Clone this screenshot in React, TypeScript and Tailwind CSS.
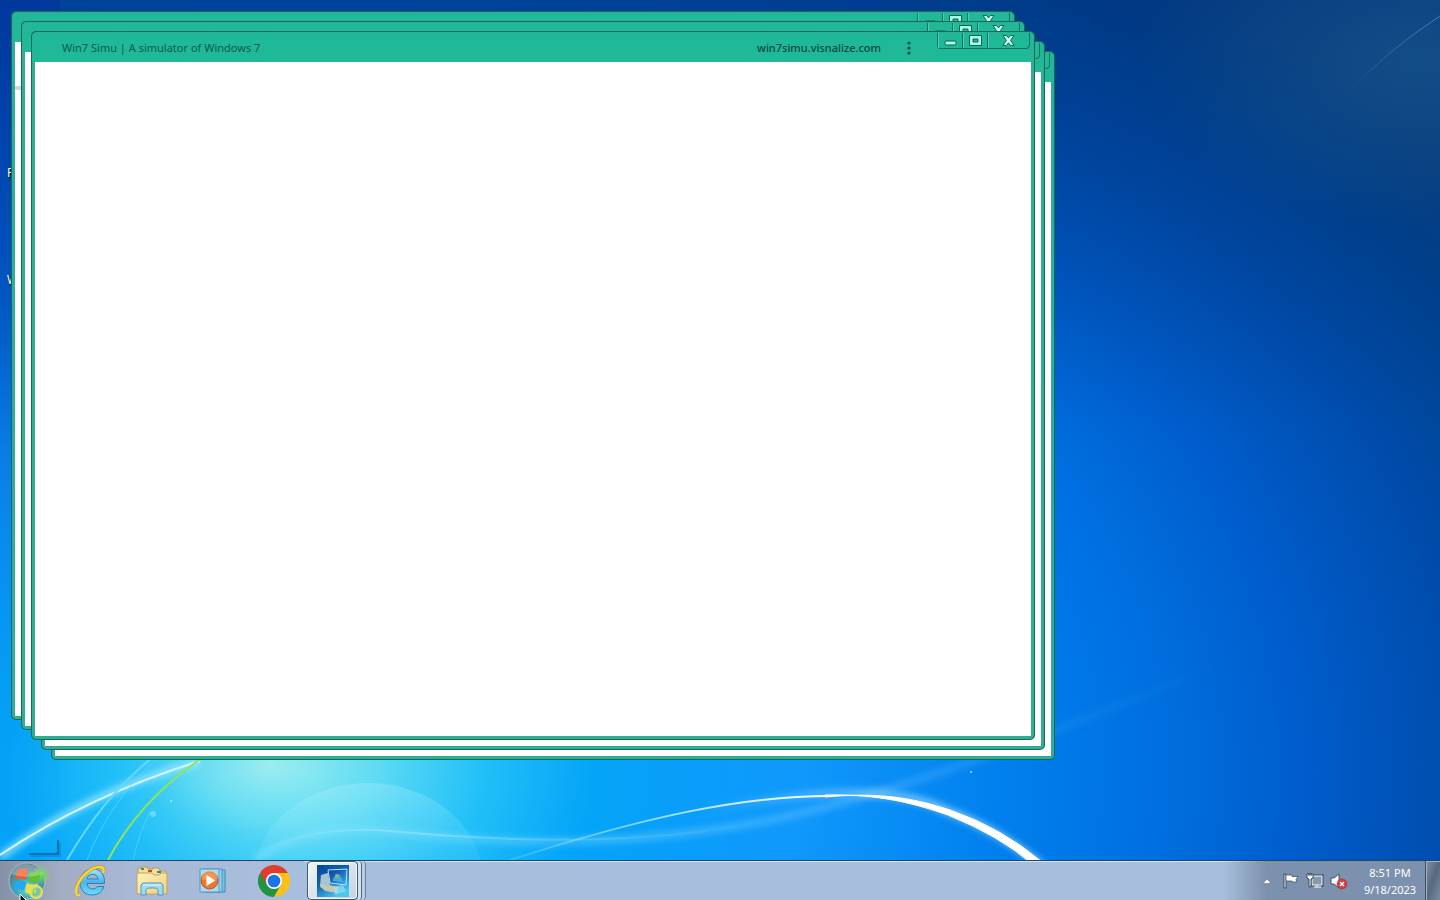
import React from 'react';
import clsx from 'clsx';

const Wallpaper: React.FC = () => (
  <svg
    className="absolute inset-0 w-full h-full"
    viewBox="0 0 1440 860"
    preserveAspectRatio="none"
    aria-hidden="true"
  >
    <defs>
      <radialGradient id="sky" gradientUnits="userSpaceOnUse" cx="0" cy="0" r="1400" gradientTransform="translate(300 770) scale(1 0.74)">
        <stop offset="0" stopColor="#70e2f2" />
        <stop offset="0.06" stopColor="#58d8f4" />
        <stop offset="0.13" stopColor="#22c0f8" />
        <stop offset="0.21" stopColor="#04a4f8" />
        <stop offset="0.36" stopColor="#1098fc" />
        <stop offset="0.5" stopColor="#0080ee" />
        <stop offset="0.62" stopColor="#006edf" />
        <stop offset="0.72" stopColor="#005cca" />
        <stop offset="0.83" stopColor="#004cac" />
        <stop offset="0.93" stopColor="#00438f" />
        <stop offset="1" stopColor="#084080" />
      </radialGradient>
      <linearGradient id="shade" x1="0" y1="0" x2="0" y2="1">
        <stop offset="0" stopColor="#003480" stopOpacity="0.6" />
        <stop offset="0.25" stopColor="#003480" stopOpacity="0.3" />
        <stop offset="0.5" stopColor="#003480" stopOpacity="0" />
      </linearGradient>
      <linearGradient id="edge" x1="0" y1="0" x2="0" y2="1">
        <stop offset="0" stopColor="#0034a0" stopOpacity="0.7" />
        <stop offset="0.35" stopColor="#0044b4" stopOpacity="0.6" />
        <stop offset="0.8" stopColor="#0070e0" stopOpacity="0.1" />
        <stop offset="1" stopColor="#0070e0" stopOpacity="0" />
      </linearGradient>
      <radialGradient id="glow">
        <stop offset="0" stopColor="#b4f2ee" stopOpacity="0.7" />
        <stop offset="1" stopColor="#7ae6f6" stopOpacity="0" />
      </radialGradient>
      <radialGradient id="haze">
        <stop offset="0" stopColor="#2a6a90" stopOpacity="0.4" />
        <stop offset="1" stopColor="#2a6a90" stopOpacity="0" />
      </radialGradient>
      <linearGradient id="bubble" x1="0" y1="0" x2="0" y2="1">
        <stop offset="0" stopColor="#c8f8ff" stopOpacity="0.24" />
        <stop offset="0.5" stopColor="#a0ecff" stopOpacity="0.04" />
      </linearGradient>
      <linearGradient id="arc" x1="0" y1="0" x2="1" y2="0">
        <stop offset="0" stopColor="#9fe4ff" stopOpacity="0.2" />
        <stop offset="0.5" stopColor="#c8f0ff" stopOpacity="0.8" />
        <stop offset="1" stopColor="#fff" />
      </linearGradient>
      <linearGradient id="arcGlow" gradientUnits="userSpaceOnUse" x1="700" y1="0" x2="960" y2="0">
        <stop offset="0" stopColor="#a8e0ff" stopOpacity="0" />
        <stop offset="1" stopColor="#a8e0ff" stopOpacity="0.7" />
      </linearGradient>
      <linearGradient id="streak" x1="0" y1="1" x2="1" y2="0">
        <stop offset="0" stopColor="#6aa8d8" stopOpacity="0" />
        <stop offset="1" stopColor="#6aa8d8" stopOpacity="0.6" />
      </linearGradient>
      <linearGradient id="wave" x1="0" y1="0" x2="1" y2="0">
        <stop offset="0" stopColor="#8fe8ff" stopOpacity="0.4" />
        <stop offset="0.6" stopColor="#6cc4ff" stopOpacity="0.4" />
        <stop offset="1" stopColor="#3a9cf8" stopOpacity="0" />
      </linearGradient>
      <linearGradient id="crest" x1="0" y1="0" x2="1" y2="0">
        <stop offset="0" stopColor="#9eeaff" stopOpacity="0" />
        <stop offset="0.3" stopColor="#9eeaff" stopOpacity="0.5" />
        <stop offset="1" stopColor="#9eeaff" stopOpacity="0" />
      </linearGradient>
      <filter id="soft" x="-10%" y="-20%" width="120%" height="140%">
        <feGaussianBlur stdDeviation="3" />
      </filter>
    </defs>
    <rect width="1440" height="860" fill="url(#sky)" />
    <rect width="1440" height="860" fill="url(#shade)" />
    <rect width="60" height="860" fill="url(#edge)" />
    <ellipse cx="270" cy="765" rx="130" ry="75" fill="url(#glow)" />
    <ellipse cx="1420" cy="60" rx="280" ry="170" fill="url(#haze)" />
    <path d="M1345 96 Q1385 52 1440 16" fill="none" stroke="url(#streak)" strokeWidth="1" />
    <ellipse cx="368" cy="880" rx="115" ry="97" fill="url(#bubble)" />
    <path d="M255 860 Q310 822 390 831 C520 848 640 844 760 822 C900 795 1060 730 1220 664" fill="none" stroke="url(#wave)" strokeWidth="8" filter="url(#soft)" />
    <path d="M245 860 Q305 824 390 831 C510 842 640 846 760 822" fill="none" stroke="url(#crest)" strokeWidth="2" />
    <path d="M0 857 Q90 790 200 762" fill="none" stroke="#9eeaff" strokeOpacity="0.7" strokeWidth="8" filter="url(#soft)" />
    <path d="M0 855 Q90 795 200 761" fill="none" stroke="#d6f5ff" strokeWidth="2" />
    <path d="M67 860 Q105 795 152 758" fill="none" stroke="#62d9ff" strokeWidth="2" />
    <path d="M87 860 Q110 800 158 758" fill="none" stroke="#62d9ff" strokeOpacity="0.7" strokeWidth="1" />
    <path d="M133 860 Q140 830 150 812" fill="none" stroke="#72e0ff" strokeOpacity="0.5" strokeWidth="1" />
    <path d="M108 860 Q140 800 202 758" fill="none" stroke="#8ee45c" strokeWidth="2" />
    <circle cx="153" cy="814" r="3" fill="#a4edff" fillOpacity="0.5" />
    <circle cx="171" cy="801" r="1" fill="#a8f0ff" />
    <circle cx="971" cy="772" r="1" fill="#a9dcff" />
    <path d="M700 813 C810 788 895 786 945 810 Q1000 830 1044 868" fill="none" stroke="url(#arcGlow)" strokeWidth="9" filter="url(#soft)" />
    <path d="M510 860 C650 815 745 796 830 796" fill="none" stroke="url(#arc)" strokeWidth="2" />
    <path d="M825 795 C870 794 905 800 948 815 Q1000 836 1032 864 L1042 862 Q1002 828 950 810 C905 795 870 793 825 797 Z" fill="#fff" stroke="#fff" strokeWidth="1" />
    <path d="M29 854 H58 V840" fill="none" stroke="#06649c" strokeOpacity="0.8" strokeWidth="2" />
    <path d="M31 856 H60 V843" fill="none" stroke="#06649c" strokeOpacity="0.3" strokeWidth="2" />
  </svg>
);

const controlClass =
  'h-[15px] flex items-center justify-center border-r border-[#14705f] shadow-[inset_1px_0_0_#4cd0b2]';

const WindowControls: React.FC = () => (
  <div className="flex self-start mr-[3px] border-l border-b border-[#14705f] rounded-b">
    <button type="button" aria-label="Minimize" className={clsx(controlClass, 'w-[25px] pt-1')}>
      <svg width="13" height="6" viewBox="0 0 13 6">
        <rect x="1" y="1" width="11" height="4" rx="1" fill="#a8fce8" stroke="#14604f" />
      </svg>
    </button>
    <button type="button" aria-label="Maximize" className={clsx(controlClass, 'w-[25px]')}>
      <svg width="13" height="11" viewBox="0 0 13 11">
        <path fillRule="evenodd" d="M.5.5h12v10H.5zM4 4h5v3H4z" fill="#a8fce8" stroke="#14604f" />
      </svg>
    </button>
    <button type="button" aria-label="Close" className={clsx(controlClass, 'w-[42px] rounded-br')}>
      <svg width="13" height="11" viewBox="0 0 13 11">
        <path d="M1 .5h3.5l2 2.4 2-2.4H12L8.6 5.4l3.5 5H8.5l-2-2.6-2 2.6H.9l3.5-5z" fill="#c8fff0" stroke="#14604f" />
      </svg>
    </button>
  </div>
);

interface AppWindowProps {
  position: string;
  withTitle?: boolean;
  children?: React.ReactNode;
}

const AppWindow: React.FC<AppWindowProps> = ({ position, withTitle = false, children }) => (
  <section
    className={clsx(
      'absolute flex flex-col rounded border border-[#2fae92] bg-[#2fae92] shadow-[0_0_0_1px_#17695a] overflow-hidden',
      position
    )}
  >
    <header className="h-[29px] flex-shrink-0 flex items-center bg-[#1fb999] text-[11px] leading-4 text-[#0b5a4c]">
      {/* 标题栏 */}
      {withTitle && <h1 className="pl-[29px] whitespace-nowrap">Win7 Simu | A simulator of Windows 7</h1>}
      <div className="flex-1" />
      {withTitle && (
        <>
          <span className="font-medium text-[#06483d] whitespace-nowrap">win7simu.visnalize.com</span>
          <button type="button" aria-label="Menu" className="w-6 h-6 ml-4 mr-4 flex items-center justify-center">
            <svg width="4" height="14" viewBox="0 0 4 14" fill="#0b4a40">
              <circle cx="2" cy="2" r="1.6" />
              <circle cx="2" cy="7" r="1.6" />
              <circle cx="2" cy="12" r="1.6" />
            </svg>
          </button>
        </>
      )}
      <WindowControls />
    </header>
    <div className="flex-1 mx-[2px] mb-[2px] bg-white">{children}</div>
  </section>
);

const StartOrb: React.FC = () => (
  <svg width="46" height="40" viewBox="0 0 46 40">
    <defs>
      <radialGradient id="orb" cx="0.5" cy="0.7" r="0.65">
        <stop offset="0" stopColor="#5ce0dc" />
        <stop offset="0.5" stopColor="#3fa4b4" />
        <stop offset="1" stopColor="#5a7486" />
      </radialGradient>
      <radialGradient id="halo">
        <stop offset="0.2" stopColor="#6ce048" stopOpacity="0.9" />
        <stop offset="1" stopColor="#84dc68" stopOpacity="0" />
      </radialGradient>
    </defs>
    <circle cx="22" cy="20" r="18" fill="url(#orb)" stroke="#9fc4cc" />
    <circle cx="36" cy="14" r="10" fill="url(#halo)" />
    <path d="M12 10q5-5 11-1l-2 10q-6-3-11 0z" fill="#f05a28" />
    <path d="M25 10q5 3 11-1l-2 10q-6 4-11 1z" fill="#63c030" />
    <path d="M10 21q5-3 11 0l-2 9q-6-4-11 0z" fill="#22a8f4" />
    <path d="M22 22q6 3 11 0l-2 9q-6 4-11 0z" fill="#f6dc3c" />
    <path d="M6 13Q12 2 22 3q11 0 16 10-16 6-32 0z" fill="#fff" fillOpacity="0.25" />
    <circle cx="31" cy="31" r="6" fill="#b4dc6c" fillOpacity="0.6" stroke="#dfe45c" strokeWidth="2" />
    <circle cx="31" cy="31" r="3" fill="none" stroke="#60c2bd" />
    <path d="M15 33v11l3-3 6 1z" fill="#111" stroke="#fff" />
  </svg>
);

const InternetExplorerIcon: React.FC = () => (
  <svg width="32" height="32" viewBox="0 0 32 32">
    <defs>
      <linearGradient id="ie" x1="0" y1="0" x2="0" y2="1">
        <stop offset="0" stopColor="#a4e8fc" />
        <stop offset="0.5" stopColor="#48b4e8" />
        <stop offset="1" stopColor="#6cdcfa" />
      </linearGradient>
    </defs>
    <path
      fillRule="evenodd"
      d="M29.500 18.500H12c.4 3.500 2.700 5.500 5.500 5.500 2.300 0 4-1 5-2.500h6.500c-2 5.500-6 8.500-12 8.500C10 30 5 25 5 17.500S10 4 17.500 4c8 0 12.500 5.500 12 14.500zM12 14h11c-.4-3-2.400-4.700-5.400-4.700S12.500 11 12 14z"
      fill="url(#ie)"
      stroke="#2784bb"
    />
    <path d="M5 30C0 32 0 24 4 17 9 8 19 1 26 2c3 .5 3 3 2 6" fill="none" stroke="#c49a22" strokeWidth="3.600" />
    <path d="M5 30C0 32 0 24 4 17 9 8 19 1 26 2c3 .5 3 3 2 6" fill="none" stroke="#f5d548" strokeWidth="2.400" />
  </svg>
);

const FolderIcon: React.FC = () => (
  <svg width="32" height="32" viewBox="0 0 32 32">
    <defs>
      <linearGradient id="folder" x1="0" y1="0" x2="1" y2="1">
        <stop offset="0" stopColor="#fdf3bd" />
        <stop offset="1" stopColor="#f0d078" />
      </linearGradient>
    </defs>
    <path d="M2 9V3h3l1-1h5l1 2h5v-1h6l1 3h6v6H2z" fill="#f3df95" stroke="#b49a52" />
    <path d="M1 8h15l2 2h5l2-2h6v21H1z" fill="url(#folder)" stroke="#c2a458" />
    <path d="M5 3h3v2H5z" fill="#36985b" />
    <path d="M12 5h4v2h-4z" fill="#c74932" />
    <path d="M21 6h4v2h-4z" fill="#327dba" />
    <path d="M5 30V20l2-2h18l2 2v10h-5v-5q-1-2-3-2h-6q-2 0-3 2v5z" fill="#a2d8ef" stroke="#4c9bc5" />
    <path d="M7 20h18" stroke="#e4f9ff" />
  </svg>
);

const PlayerIcon: React.FC = () => (
  <svg width="32" height="32" viewBox="0 0 32 32">
    <path d="M9 5h19v22H9z" fill="#7bc0e4" stroke="#3f8cba" />
    <path d="M6 4h19v23H6z" fill="#9bd4ee" stroke="#4796c2" />
    <path d="M3 4h19v23H3z" fill="#aed9f0" stroke="#519ac4" />
    <circle cx="12.500" cy="15.500" r="8.500" fill="#ef762d" stroke="#b65724" />
    <path d="M4.500 14a8 8 0 0 1 16 0q-8 4-16 0z" fill="#f7aa6c" fillOpacity="0.6" />
    <path d="M9.500 10v11l9-5.500z" fill="#fff" />
  </svg>
);

const ChromeIcon: React.FC = () => (
  <svg width="32" height="32" viewBox="0 0 48 48">
    <path d="M24 24 3.200 12A24 24 0 0 1 44.800 12z" fill="#e33b2e" />
    <path d="M24 24 3.200 12A24 24 0 0 0 24 48l10.400-18z" fill="#229342" />
    <path d="M24 24h-1L34.400 30 24 48A24 24 0 0 0 44.800 12H24z" fill="#fbc116" />
    <path d="M24 12h20.800H24A12 12 0 0 0 13.600 30L3.200 12z" fill="#e33b2e" />
    <circle cx="24" cy="24" r="12" fill="#fff" />
    <circle cx="24" cy="24" r="9.500" fill="#1a73e8" />
  </svg>
);

const SimuIcon: React.FC = () => (
  <svg width="32" height="32" viewBox="0 0 32 32">
    <defs>
      <linearGradient id="tile" x1="0" y1="0" x2="0.600" y2="1">
        <stop offset="0" stopColor="#04489c" />
        <stop offset="0.500" stopColor="#0d62b4" />
        <stop offset="1" stopColor="#49c9eb" />
      </linearGradient>
      <linearGradient id="screen" x1="0" y1="0" x2="1" y2="1">
        <stop offset="0" stopColor="#0a3c90" />
        <stop offset="0.500" stopColor="#1c6cc4" />
        <stop offset="1" stopColor="#35b5f2" />
      </linearGradient>
    </defs>
    <path d="M0 0h32v32H0z" fill="url(#tile)" />
    <path d="M4 10l7-2 2 12 9 2-2 6-12-2-5-5z" fill="#a9c4cc" />
    <path d="M3 19q7 2 17 4l-1 4Q9 26 3 22z" fill="#dcc99d" fillOpacity="0.7" />
    <path d="M11 5l19 -1-1 16-16-2z" fill="url(#screen)" stroke="#b8e6fa" />
    <path d="M16 14q3-6 7-4l3 7-10-1z" fill="#5cc0dc" fillOpacity="0.7" />
    <circle cx="20" cy="11" r="2" fill="#8cba74" />
    <path d="M17 22l9-2 3 6-11 4z" fill="#a7eafa" fillOpacity="0.6" />
  </svg>
);

const pinnedApps = [
  { name: 'Internet Explorer', Icon: InternetExplorerIcon },
  { name: 'Windows Explorer', Icon: FolderIcon },
  { name: 'Windows Media Player', Icon: PlayerIcon },
  { name: 'Google Chrome', Icon: ChromeIcon },
];

const Tray: React.FC = () => (
  <div className="flex items-stretch pl-8 bg-linear-to-r from-[#7c91ad]/0 via-[#7c91ad] via-20% to-[#7c91ad] text-white">
    <button type="button" aria-label="Show hidden icons" className="w-6 flex items-center justify-center">
      <svg width="10" height="6" viewBox="0 0 10 6">
        <path d="M1 5.500 5 1l4 4.500z" fill="#fff" stroke="#50647e" strokeWidth="0.500" />
      </svg>
    </button>
    <button type="button" aria-label="Action Center" className="w-6 flex items-center justify-center">
      <svg width="18" height="18" viewBox="0 0 18 18">
        <path d="M2 2h2v14H2z" fill="#fff" stroke="#34475f" />
        <path d="M4 3h6v1.500h6l-2 3 1 2.500h-5V9H4z" fill="#fff" stroke="#34475f" strokeWidth="0.700" />
      </svg>
    </button>
    <button type="button" aria-label="Network" className="w-6 flex items-center justify-center">
      <svg width="18" height="18" viewBox="0 0 18 18">
        <path d="M6 4h10v9H6z" fill="#71869f" stroke="#34475f" strokeWidth="3" />
        <path d="M6 4h10v9H6zM8 15h7M11 13v2" fill="#8799b0" stroke="#fff" />
        <path d="M1 2h6v4L5 7v8H3V7L1 6z" fill="#fff" stroke="#34475f" />
        <path d="M3 1v3M5 1v3" stroke="#34475f" />
      </svg>
    </button>
    <button type="button" aria-label="Volume muted" className="w-6 flex items-center justify-center">
      <svg width="18" height="18" viewBox="0 0 18 18">
        <path d="M1 6h3l5-4v14l-5-4H1z" fill="#fff" stroke="#40536a" />
        <circle cx="12" cy="12" r="5" fill="#d93b3b" stroke="#8f3038" strokeWidth="0.500" />
        <path d="m10 10 4 4m0-4-4 4" stroke="#fff" strokeWidth="1.500" />
      </svg>
    </button>
    <button type="button" className="w-[74px] pl-1 flex flex-col items-center justify-center text-[11px] leading-[17px]">
      <span>8:51 PM</span>
      <span>9/18/2023</span>
    </button>
    <button
      type="button"
      aria-label="Show desktop"
      className="w-[15px] border-l border-[#3c4f68] bg-linear-to-br from-[#8492a4] via-[#58687e] to-[#7a8da6] shadow-[inset_1px_1px_0_#a2b0c0]"
    />
  </div>
);

const Taskbar: React.FC = () => (
  <footer className="relative h-10 flex-shrink-0 flex border-t border-[#24445f] bg-[#a7bfdd] shadow-[inset_0_1px_0_#d3e2f0]">
    <button
      type="button"
      aria-label="Start"
      className="w-15 pl-[5px] flex items-center overflow-hidden bg-linear-to-r from-[#8491a7] to-[#a2acc2]"
    >
      <StartOrb />
    </button>
    <nav className="flex bg-linear-to-r from-[#a2acc2] via-[#a8b9d6] via-30% to-[#a7bfdd]">
      {pinnedApps.map(({ name, Icon }) => (
        <button key={name} type="button" aria-label={name} className="w-[61px] flex items-center justify-center">
          <Icon />
        </button>
      ))}
    </nav>
    {/* 同一应用的多个窗口叠放 */}
    <div className="flex pl-[3px]">
      <button
        type="button"
        aria-label="Win7 Simu"
        className="w-[51px] flex items-center justify-center rounded-sm border border-[#405772] bg-linear-to-br from-[#f1f5fa] to-[#c4d2e4] shadow-[inset_0_0_0_1px_#f4f9ff]"
      >
        <SimuIcon />
      </button>
      <span className="w-1 border-r border-[#506782] bg-[#d5e1ef] rounded-r-sm" />
      <span className="w-1 border-r border-[#6b809b] bg-[#bdcde1] rounded-r-sm" />
    </div>
    <div className="flex-1" />
    <Tray />
  </footer>
);

const App: React.FC = () => {
  return (
    <div className="h-screen flex flex-col overflow-hidden bg-[#0068d8] font-['Noto_Sans','Open_Sans',sans-serif]">
      <main className="relative flex-1 min-h-0 overflow-hidden">
        <Wallpaper />
        <div className="relative pl-[7px] pt-[165px] flex flex-col gap-[91px] text-[12px] leading-4 text-white text-shadow-[1px_1px_1px_#000]">
          <span>F</span>
          <span>W</span>
        </div>
        <AppWindow position="left-[52px] right-[386px] top-[52px] bottom-[101px]" />
        <AppWindow position="left-[42px] right-[396px] top-[42px] bottom-[111px]" />
        <AppWindow position="left-3 right-[426px] top-3 bottom-[141px]">
          <div className="mt-11 h-1 bg-gray-300" />
        </AppWindow>
        <AppWindow position="left-[22px] right-[416px] top-[22px] bottom-[131px]" />
        <AppWindow position="left-8 right-[406px] top-8 bottom-[121px]" withTitle />
      </main>
      <Taskbar />
    </div>
  );
};

export default App;
